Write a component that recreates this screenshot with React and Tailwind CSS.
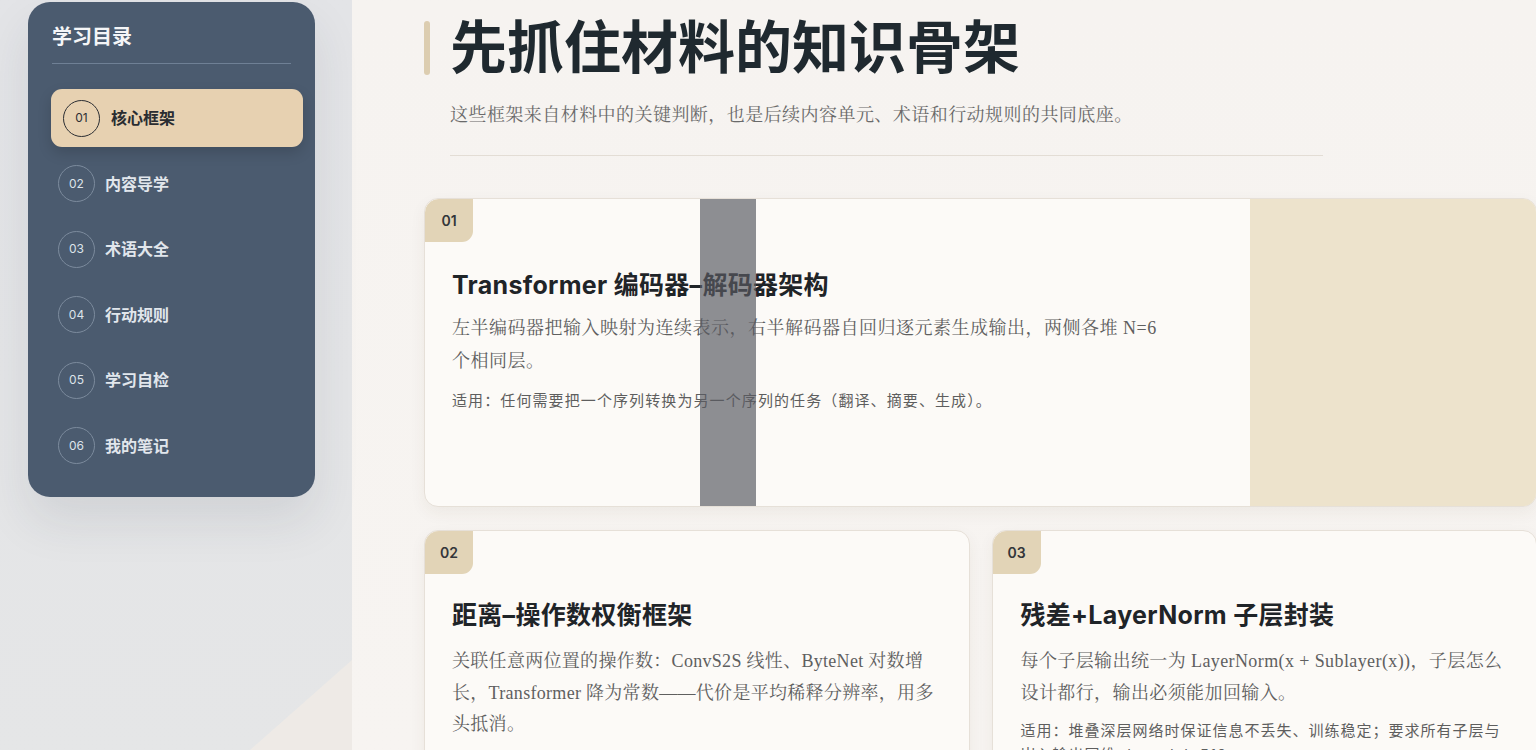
import React from "react";

const sans = { fontFamily: '"Inter", "Noto Sans CJK SC", sans-serif' };

const navItems = [
  { n: "01", t: "核心框架", active: true },
  { n: "02", t: "内容导学" },
  { n: "03", t: "术语大全" },
  { n: "04", t: "行动规则" },
  { n: "05", t: "学习自检" },
  { n: "06", t: "我的笔记" },
];

function Sidebar() {
  return (
    <div className="relative w-[352px] shrink-0 h-full bg-gradient-to-b from-[#e3e4e7] to-[#e5e6e7]">
      <div className="absolute inset-0 bg-[#eeeae6] [clip-path:polygon(100%_88%,100%_100%,71%_100%)]" />
      <div className="relative ml-[28px] mt-[2px] w-[287px] rounded-[22px] bg-[#4b5b6f] px-[23px] pt-[21px] pb-[22px] shadow-[0_24px_48px_rgba(40,50,70,0.10)]">
        <div className="px-[1px] text-[20px] leading-[28px] font-bold text-[#f4f5f7]">学习目录</div>
        <div className="mt-[12px] mx-[1px] h-px bg-[#6f8095]" />
        <div className="mt-[25px] mr-[-11px] flex flex-col gap-[7.5px]">
          {navItems.map((it) =>
            it.active ? (
              <div
                key={it.n}
                className="flex h-[58px] items-center rounded-[11px] bg-[#e7d1b1] pl-[12px] shadow-[0_6px_14px_rgba(0,0,0,0.15)]"
              >
                <div className="flex h-[37px] w-[37px] items-center justify-center rounded-full border border-[#2b2e33] text-[12px] text-[#2b2e33]">
                  {it.n}
                </div>
                <div className="ml-[11px] text-[16px] font-bold text-[#2a2d31]">{it.t}</div>
              </div>
            ) : (
              <div key={it.n} className="flex h-[58px] items-center pl-[7px]">
                <div className="flex h-[37px] w-[37px] items-center justify-center rounded-full border border-[#7c8b9d] text-[12px] text-[#dde3ea]">
                  {it.n}
                </div>
                <div className="ml-[10px] text-[16px] font-bold text-[#e1e6ec]">{it.t}</div>
              </div>
            )
          )}
        </div>
      </div>
    </div>
  );
}

const serif = {
  fontFamily: '"Liberation Serif", "Noto Serif CJK SC", "Noto Sans CJK SC", serif',
};

function Badge({ n }) {
  return (
    <div className="absolute left-0 top-0 flex h-[43px] w-[48px] items-center justify-center rounded-tl-[14px] rounded-br-[11px] bg-[#e2d4b7] text-[14px] font-semibold text-[#33363a]">
      {n}
    </div>
  );
}

function Lines({ lines, className, style }) {
  return (
    <div className={className} style={style}>
      {lines.map((l, i) => (
        <div key={i} className="whitespace-nowrap">
          {l}
        </div>
      ))}
    </div>
  );
}

export default function App() {
  return (
    <div className="flex h-[750px] w-full overflow-hidden bg-[#f7f4f1]" style={sans}>
      <Sidebar />
      <main className="flex-1 min-w-0 bg-gradient-to-b from-[#f6f3f0] to-[#f7f4f1] pl-[72px] pt-[16px]">
        <div className="flex items-center gap-[20px]">
          <div className="h-[54px] w-[6px] rounded-full bg-[#dccdb0]" />
          <h1 className="text-[57px] leading-[63px] font-bold text-[#1f292f]">先抓住材料的知识骨架</h1>
        </div>
        <div className="ml-[26px]">
          <p className="mt-[22px] text-[18px] leading-[28px] tracking-[0.45px] text-[#6a6a6a]" style={serif}>
            这些框架来自材料中的关键判断，也是后续内容单元、术语和行动规则的共同底座。
          </p>
          <div className="mt-[26px] h-px w-[873px] bg-[#e3ddd5]" />
        </div>

        <div className="mt-[42px] w-[1113px]">
          <div className="relative grid h-[309px] grid-cols-[1fr_286px] overflow-hidden rounded-[14px] border border-[#e6e0d8] bg-[#fcfaf7] shadow-[0_6px_16px_rgba(80,60,40,0.06)]">
            <Badge n="01" />
            <div className="pl-[27px] pt-[71px]">
              <h2 className="text-[25px] leading-[30px] tracking-[0.3px] font-bold text-[#1f2428]">Transformer 编码器–解码器架构</h2>
              <Lines
                className="mt-[12px] text-[18px] leading-[33px] tracking-[0.5px] text-[#5f5f5f]"
                style={serif}
                lines={["左半编码器把输入映射为连续表示，右半解码器自回归逐元素生成输出，两侧各堆 N=6", "个相同层。"]}
              />
              <p className="mt-[11px] text-[15px] leading-[24px] tracking-[1.1px] text-[#5e5e5e]">
                适用：任何需要把一个序列转换为另一个序列的任务（翻译、摘要、生成）。
              </p>
            </div>
            <div className="bg-[#ede3cc]" />
            <div className="absolute top-0 bottom-0 left-[275px] w-[56px] bg-[rgba(88,90,98,0.68)]" />
          </div>

          <div className="mt-[23px] grid grid-cols-2 gap-[22px]">
            <div className="relative rounded-[14px] border border-[#e6e0d8] bg-[#fcfaf7] pl-[27px] pt-[69px] pb-[28px] shadow-[0_6px_16px_rgba(80,60,40,0.06)]">
              <Badge n="02" />
              <h2 className="text-[25px] leading-[30px] tracking-[0.3px] font-bold text-[#1f2428]">距离–操作数权衡框架</h2>
              <Lines
                className="mt-[16px] text-[18px] leading-[31.5px] tracking-[0.3px] text-[#5f5f5f]"
                style={serif}
                lines={[
                  "关联任意两位置的操作数：ConvS2S 线性、ByteNet 对数增",
                  "长，Transformer 降为常数——代价是平均稀释分辨率，用多",
                  "头抵消。",
                ]}
              />
            </div>
            <div className="relative rounded-[14px] border border-[#e6e0d8] bg-[#fcfaf7] pl-[28px] pt-[69px] pb-[28px] shadow-[0_6px_16px_rgba(80,60,40,0.06)]">
              <Badge n="03" />
              <h2 className="text-[25px] leading-[30px] tracking-[0.3px] font-bold text-[#1f2428]">残差+LayerNorm 子层封装</h2>
              <Lines
                className="mt-[15px] text-[18px] leading-[32px] tracking-[0.4px] text-[#5f5f5f]"
                style={serif}
                lines={["每个子层输出统一为 LayerNorm(x + Sublayer(x))，子层怎么", "设计都行，输出必须能加回输入。"]}
              />
              <Lines
                className="mt-[10px] text-[15px] leading-[24px] tracking-[1px] text-[#5e5e5e]"
                lines={["适用：堆叠深层网络时保证信息不丢失、训练稳定；要求所有子层与", "嵌入输出同维 d_model=512。"]}
              />
            </div>
          </div>
        </div>
      </main>
    </div>
  );
}
